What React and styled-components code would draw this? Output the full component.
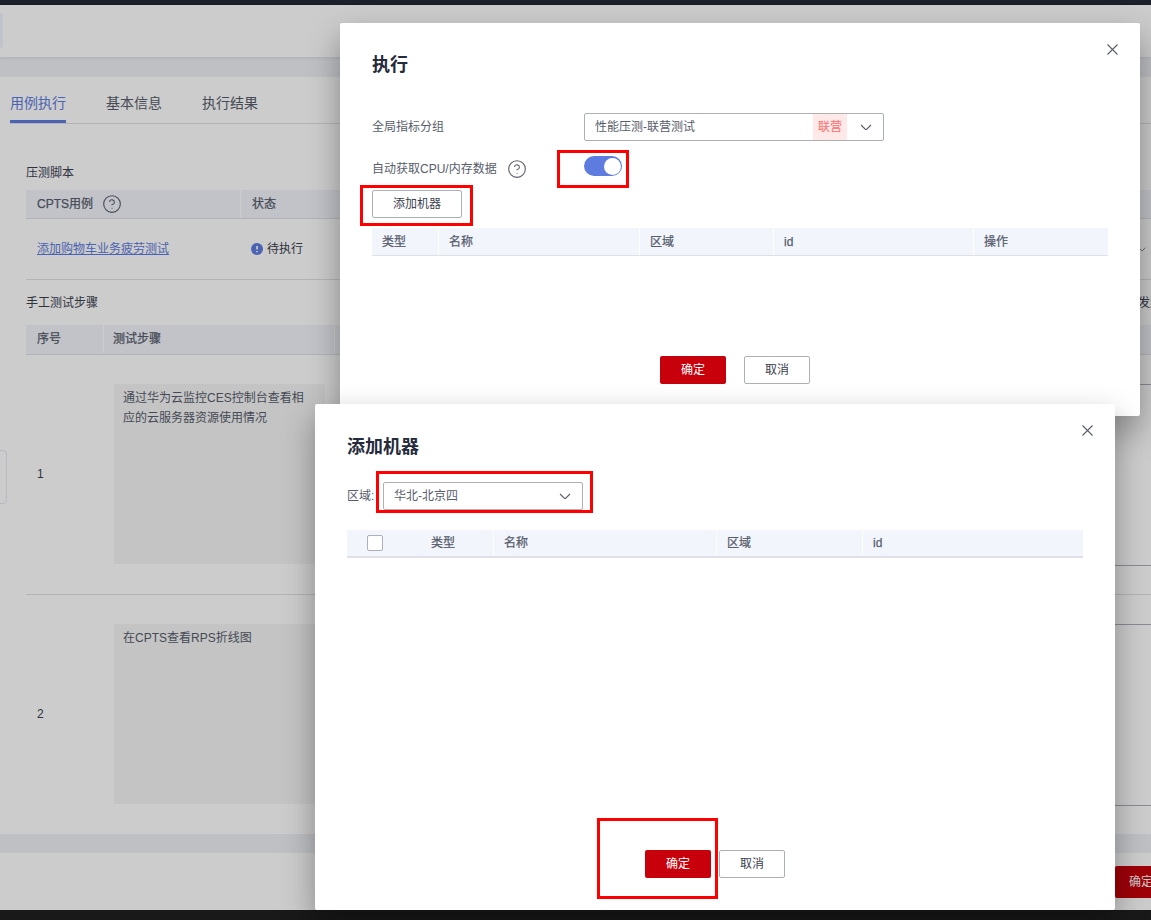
import React from 'react';
import styled, { createGlobalStyle } from 'styled-components';
import { CircleHelp } from 'lucide-react';

const Global = createGlobalStyle`
  html, body { margin: 0; padding: 0; background: #fff; overflow: hidden; }
  * { box-sizing: border-box; }
  body { font: 12px/20px "Liberation Sans", "Noto Sans CJK SC", sans-serif; color: #575d6c; }
`;

const Page = styled.div`
  position: relative; width: 1151px; height: 920px; overflow: hidden;
  display: flex; flex-direction: column; background: #fff;
`;
const TopBar = styled.div`height: 5px; flex: none; background: #232836;`;
const BottomBar = styled.div`height: 10px; flex: none; background: #202020;`;
const Header = styled.header`
  height: 52px; flex: none; display: flex; align-items: flex-start; padding-top: 8px;
  box-shadow: 0 1px 3px rgba(0,0,0,.08); position: relative;
`;
const HeaderButton = styled.div`width: 3px; height: 35px; background: #f1f6fc; border-radius: 0 4px 4px 0;`;
const Strip = styled.div`height: ${p => p.$h}px; flex: none; background: #eff0f5;`;
const Main = styled.main`height: 757px; flex: none; overflow: hidden; position: relative;`;
const Tabs = styled.nav`
  height: 47px; margin-left: 10px; display: flex; gap: 40px;
  border-bottom: 1px solid #dfe1e6;
`;
const Tab = styled.div`
  height: 46px; padding-top: 16px; font-size: 14px; line-height: 20px; color: ${p => p.$active ? '#5e7ce0' : '#575d6c'};
  border-bottom: 3px solid ${p => p.$active ? '#5e7ce0' : 'transparent'};
`;
const Section = styled.section`margin-left: 26px; width: 1160px;`;
const SectionTitle = styled.div`
  display: flex; justify-content: space-between; color: #3a4050; line-height: 20px; font-weight: 400;
  margin-top: ${p => p.$mt}px; margin-bottom: ${p => p.$mb}px;
`;
const ScriptHead = styled.div`
  display: grid; grid-template-columns: 214px 1fr; height: 29px; background: #f2f4fb;
  border-bottom: 1px solid #dfe1e6; -webkit-text-stroke: .25px #575d6c;
`;
const HeadCell = styled.div`
  display: flex; align-items: center; gap: 9px; padding-left: ${p => p.$pl ?? 11}px; height: 28px;
  border-left: ${p => p.$first ? 'none' : '1px solid #fff'};
`;
const ScriptRow = styled.div`
  display: grid; grid-template-columns: 214px 1fr 48px; height: 61px; align-items: center;
  border-bottom: 1px solid #dfe1e6;
`;
const LinkText = styled.a`color: #5e7ce0; text-decoration: underline; padding-left: 11px;`;
const Status = styled.div`display: flex; align-items: center; gap: 4px; padding-left: 11px; color: #3a4050;`;
const StepHead = styled.div`
  display: grid; grid-template-columns: 77px 231px 1fr; height: 30px; background: #f2f4fb;
  border-bottom: 1px solid #dfe1e6; -webkit-text-stroke: .25px #575d6c;
`;
const StepRow = styled.div`
  display: grid; grid-template-columns: 77px 231px 1fr; height: 240px; padding-top: 29px;
  border-bottom: 1px solid #dfe1e6;
`;
const StepIndex = styled.div`height: 180px; padding-left: 11px; display: flex; align-items: center; color: #3a4050;`;
const StepText = styled.div`
  margin-left: 11px; width: 211px; height: 180px; background: #f5f5f5; color: #575d6c;
  padding: 5px 10px 0 9px; line-height: 19.5px;
`;
const StepBox = styled.div`height: 182px; border: 1px solid #adb0b8; margin-left: 11px;`;
const SideHandle = styled.div`
  position: absolute; left: -4px; top: 450px; width: 11px; height: 54px;
  background: #fff; border: 1px solid #e6e8ec; border-radius: 4px;
`;
const Footer = styled.footer`
  height: 57px; flex: none; width: 1195px; padding-top: 13px; display: flex; justify-content: flex-end;
`;
const PageSubmit = styled.div`
  width: 80px; height: 32px; background: #c7000b; color: #fff; line-height: 32px;
  border-radius: 2px; padding-left: 14px;
`;
const Mask = styled.div`position: absolute; inset: 0; background: rgba(0,0,0,.2);`;
const Dialog = styled.div`
  position: absolute; left: ${p => p.$x}px; top: ${p => p.$y}px; width: 800px; height: ${p => p.$h}px;
  background: #fff; border-radius: 2px; box-shadow: 0 14px 32px rgba(0,0,0,.35);
  display: flex; flex-direction: column; padding: ${p => p.$pt}px 32px 32px;
`;
const Close = styled.svg`
  position: absolute; right: 22px; top: 21px; width: 11px; height: 11px;
  stroke: #575d6c; stroke-width: 1.1; fill: none;
`;
const Title = styled.h2`
  margin: 0; font-size: 18px; line-height: 24px; font-weight: 700; color: #252b3a;
`;
const FormRow = styled.div`
  display: flex; align-items: ${p => p.$align || 'center'}; margin-top: ${p => p.$mt}px;
`;
const Label = styled.div`width: ${p => p.$w}px; flex: none; display: flex; align-items: center; gap: 10px; margin-top: ${p => p.$mt || 0}px;`;
const Select = styled.div`
  width: ${p => p.$w}px; height: 28px; border: 1px solid #adb0b8; border-radius: 2px;
  display: flex; align-items: center; padding: 0 11px 0 10px; color: #575d6c;
`;
const SelectText = styled.span`flex: 1;`;
const Tag = styled.span`
  width: 34px; height: 26px; line-height: 26px; text-align: center; background: #ffe9e8; color: #ff6b6b; margin-right: 13px;
`;
const Chevron = styled.svg`width: ${p => p.$w}px; height: ${p => p.$w * 0.58}px; stroke: #575d6c; stroke-width: 1.1; fill: none; flex: none;`;
const Switch = styled.div`
  position: relative; width: 38px; height: 20px; border-radius: 10px; background: #5e7ce0;
  &::after { content: ''; position: absolute; right: 1px; top: 1.5px; width: 17px; height: 17px; border-radius: 50%; background: #fff; }
`;
const OutlineButton = styled.div`
  width: ${p => p.$w}px; height: 28px; border: 1px solid #adb0b8; border-radius: 2px; text-align: center;
  line-height: 26px; color: #3a4050; flex: none;
`;
const AddButton = styled(OutlineButton)`margin-top: 11px;`;
const PrimaryButton = styled.div`
  width: 66px; height: 28px; background: #c7000b; color: #fff; border-radius: 2px; text-align: center; line-height: 28px; flex: none;
`;
const DataHead = styled.div`
  display: grid; grid-template-columns: ${p => p.$cols}; height: 28px; margin-top: ${p => p.$mt}px;
  background: #f2f5fc; border-bottom: ${p => p.$thick ? 2 : 1}px solid #dfe1e6; -webkit-text-stroke: .25px #575d6c; flex: none;
`;
const DataCell = styled.div`
  display: flex; align-items: center; height: 100%; padding-left: ${p => p.$pl ?? 10}px;
  border-left: ${p => p.$first ? 'none' : '1px solid #fff'};
`;
const Check = styled.div`width: 16px; height: 16px; border: 1px solid #adb0b8; border-radius: 2px; background: #fff; margin-left: 20px; margin-right: 48px; flex: none;`;
const Actions = styled.div`
  margin-top: auto; display: flex; justify-content: center; gap: ${p => p.$gap}px; padding-right: ${p => p.$pr || 0}px;
`;
const Highlight = styled.div`
  position: absolute; left: ${p => p.$x}px; top: ${p => p.$y}px; width: ${p => p.$w}px; height: ${p => p.$h}px;
  border: 3px solid #f00;
`;

const ChevronIcon = ({ w = 12 }) => <Chevron $w={w} viewBox="0 0 12 7"><path d="M1 1l5 5 5-5" /></Chevron>;
const CloseIcon = () => <Close viewBox="0 0 11 11"><path d="M.5.5l10 10M10.5.5l-10 10" /></Close>;
const InfoDot = () => (
  <svg width="12" height="12" viewBox="0 0 12 12">
    <circle cx="6" cy="6" r="6" fill="#5e7ce0" />
    <path d="M6 3v3.6M6 8v1.2" stroke="#fff" strokeWidth="1.6" />
  </svg>
);

export default function App() {
  return (
    <Page>
      <Global />
      <TopBar />
      <Header><HeaderButton /></Header>
      <Strip $h={20} />
      <Main>
        <Tabs>
          <Tab $active>用例执行</Tab>
          <Tab>基本信息</Tab>
          <Tab>执行结果</Tab>
        </Tabs>
        <Section>
          <SectionTitle $mt={39} $mb={7}>压测脚本</SectionTitle>
          <ScriptHead>
            <HeadCell $first>CPTS用例 <CircleHelp size={20} strokeWidth={1.3} color="#575d6c" /></HeadCell>
            <HeadCell>状态</HeadCell>
          </ScriptHead>
          <ScriptRow>
            <LinkText>添加购物车业务疲劳测试</LinkText>
            <Status><InfoDot />待执行</Status>
            <ChevronIcon w={8} />
          </ScriptRow>
          <SectionTitle $mt={13} $mb={12}>手工测试步骤<span>发送报告</span></SectionTitle>
          <StepHead>
            <HeadCell $first>序号</HeadCell>
            <HeadCell $pl={9}>测试步骤</HeadCell>
            <HeadCell />
          </StepHead>
          <StepRow>
            <StepIndex>1</StepIndex>
            <StepText>通过华为云监控CES控制台查看相应的云服务器资源使用情况</StepText>
            <StepBox />
          </StepRow>
          <StepRow>
            <StepIndex>2</StepIndex>
            <StepText>在CPTS查看RPS折线图</StepText>
            <StepBox />
          </StepRow>
        </Section>
      </Main>
      <Strip $h={19} />
      <Footer><PageSubmit>确定</PageSubmit></Footer>
      <BottomBar />
      <SideHandle />
      <Mask />

      <Dialog $x={340} $y={23} $h={393} $pt={30}>
        <CloseIcon />
        <Title>执行</Title>
        <FormRow $mt={36}>
          <Label $w={212}>全局指标分组</Label>
          <Select $w={300}>
            <SelectText>性能压测-联营测试</SelectText>
            <Tag>联营</Tag>
            <ChevronIcon />
          </Select>
        </FormRow>
        <FormRow $mt={15} $align="flex-start">
          <Label $w={212} $mt={3}>自动获取CPU/内存数据 <CircleHelp size={20} strokeWidth={1.3} color="#575d6c" /></Label>
          <Switch />
        </FormRow>
        <AddButton $w={90}>添加机器</AddButton>
        <DataHead $mt={10} $cols="66px 201px 134px 200px 1fr">
          <DataCell $first>类型</DataCell>
          <DataCell>名称</DataCell>
          <DataCell>区域</DataCell>
          <DataCell>id</DataCell>
          <DataCell>操作</DataCell>
        </DataHead>
        <Actions $gap={18} $pr={10}>
          <PrimaryButton>确定</PrimaryButton>
          <OutlineButton $w={66}>取消</OutlineButton>
        </Actions>
      </Dialog>

      <Dialog $x={315} $y={404} $h={506} $pt={31}>
        <CloseIcon />
        <Title>添加机器</Title>
        <FormRow $mt={23}>
          <Label $w={36}>区域:</Label>
          <Select $w={200}>
            <SelectText>华北-北京四</SelectText>
            <ChevronIcon />
          </Select>
        </FormRow>
        <DataHead $mt={20} $thick $cols="146px 223px 146px 1fr">
          <DataCell $first $pl={0}><Check />类型</DataCell>
          <DataCell>名称</DataCell>
          <DataCell>区域</DataCell>
          <DataCell>id</DataCell>
        </DataHead>
        <Actions $gap={8}>
          <PrimaryButton>确定</PrimaryButton>
          <OutlineButton $w={66}>取消</OutlineButton>
        </Actions>
      </Dialog>

      <Highlight $x={557} $y={150} $w={72} $h={38} />
      <Highlight $x={360} $y={185} $w={113} $h={41} />
      <Highlight $x={376} $y={471} $w={217} $h={42} />
      <Highlight $x={597} $y={818} $w={121} $h={81} />
    </Page>
  );
}
